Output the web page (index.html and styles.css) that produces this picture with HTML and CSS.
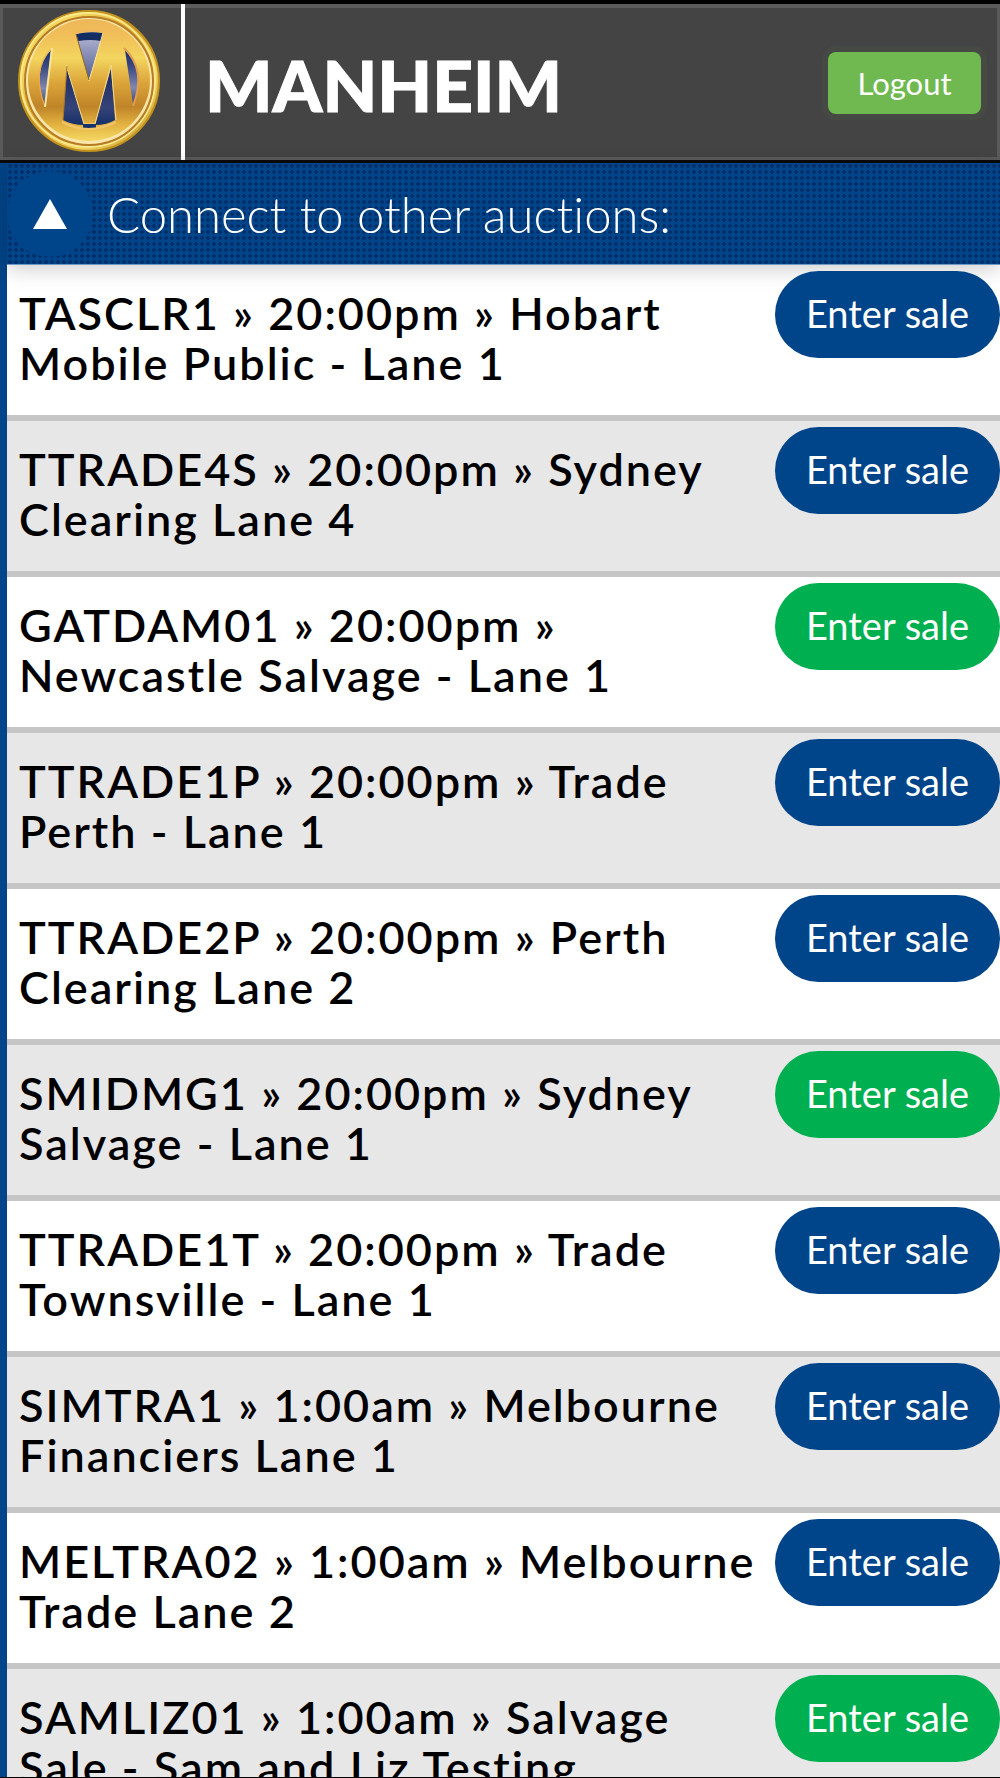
FILE: index.html
```html
<!DOCTYPE html>
<html lang="en">
<head>
<meta charset="utf-8">
<meta name="viewport" content="width=device-width, initial-scale=1">
<title>Manheim auctions</title>
<link rel="stylesheet" href="styles.css">
</head>
<body>
<div class="app">
  <header class="topbar">
    <svg class="logo" viewBox="0 0 144 144" aria-hidden="true">
      <defs>
        <linearGradient id="rim" x1="0" y1="0" x2="1" y2="1">
          <stop offset="0" stop-color="#d9a528"/>
          <stop offset=".2" stop-color="#f6dc62"/>
          <stop offset=".45" stop-color="#dda62c"/>
          <stop offset=".7" stop-color="#f4d663"/>
          <stop offset="1" stop-color="#bd8a1c"/>
        </linearGradient>
        <linearGradient id="gold" x1="0" y1="0" x2="0" y2="1">
          <stop offset="0" stop-color="#eeb75a"/>
          <stop offset=".12" stop-color="#f0bd58"/>
          <stop offset=".32" stop-color="#f3d55f"/>
          <stop offset=".52" stop-color="#dca53a"/>
          <stop offset=".72" stop-color="#bf8428"/>
          <stop offset=".86" stop-color="#e2b140"/>
          <stop offset="1" stop-color="#f4d862"/>
        </linearGradient>
        <linearGradient id="sky" x1="0" y1="0" x2="0" y2="1">
          <stop offset="0" stop-color="#b9bbd6"/>
          <stop offset="1" stop-color="#505a90"/>
        </linearGradient>
        <linearGradient id="navy" x1="0" y1="0" x2="0" y2="1">
          <stop offset="0" stop-color="#1b2a62"/>
          <stop offset=".7" stop-color="#354377"/>
          <stop offset="1" stop-color="#15306a"/>
        </linearGradient>
        <linearGradient id="lens" x1="0" y1="0" x2="0" y2="1">
          <stop offset="0" stop-color="#15306a"/>
          <stop offset=".3" stop-color="#3c497f"/>
          <stop offset=".7" stop-color="#8087b0"/>
          <stop offset="1" stop-color="#354377"/>
        </linearGradient>
      </defs>
      <circle cx="72" cy="71" r="70" fill="url(#rim)" stroke="#c2921f" stroke-width="2"/>
      <circle cx="71" cy="70" r="67" fill="none" stroke="#f8e88c" stroke-width="2"/>
      <circle cx="72" cy="71" r="64" fill="#fae6a8" stroke="#b57b25" stroke-width="2"/>
      <circle cx="72" cy="70" r="61" fill="url(#gold)"/>
      <path d="M59 24q13-3 27-1L72 70z" fill="url(#sky)"/>
      <path d="M59 24q13-3 27-1l-2 8q-10-2-23 0z" fill="#132d62"/>
      <path d="M59 23q13-4 27-1" fill="none" stroke="#f0b660" stroke-width="2"/>
      <path d="M86 23L72 71" fill="none" stroke="#f8e6a0" stroke-width="1"/>
      <path d="M59 24l13 46" fill="none" stroke="#8a6528" stroke-width="1"/>
      <path d="M50 58l17 57q-12 0-21-5z" fill="url(#navy)"/>
      <path d="M94 58L78 115q12 0 20-5z" fill="url(#navy)"/>
      <path d="M49 55l18 59h11l16-59 5 55" fill="none" stroke="#f3dc90" stroke-width="1"/>
      <path d="M50 56l-4 54" fill="none" stroke="#a87828" stroke-width="1"/>
      <path d="M66 114h13v4q-6 1-13 0z" fill="#15306a"/>
      <path d="M45 112q26 14 54 0" fill="none" stroke="#f0c56b" stroke-width="2"/>
      <path d="M34 40Q15 60 28 95z" fill="url(#lens)"/>
      <path d="M34 39Q14 60 28 97" fill="none" stroke="#f0a850" stroke-width="1"/>
      <path d="M35 38l-7 59" fill="none" stroke="#f8e6a0" stroke-width="2"/>
      <path d="M108 40q21 20 8 54z" fill="url(#lens)"/>
      <path d="M107 38q23 22 9 58" fill="none" stroke="#e19d52" stroke-width="2"/>
    </svg>
    <span class="brand">MANHEIM</span>
    <button class="logout" type="button">Logout</button>
  </header>
  <main class="panel">
    <div class="panel-head">
      <button class="toggle" type="button" aria-label="Collapse auctions">
        <svg class="arrow" viewBox="0 0 34 30" aria-hidden="true"><path d="M17 0l17 30H0z" fill="#fff"/></svg>
      </button>
      <h1 class="title">Connect to other auctions:</h1>
    </div>
    <ul class="sales">
      <li class="sale"><span class="name">TASCLR1 » 20:00pm » Hobart Mobile Public - Lane 1</span><button class="enter" type="button">Enter sale</button></li>
      <li class="sale"><span class="name">TTRADE4S » 20:00pm » Sydney Clearing Lane 4</span><button class="enter" type="button">Enter sale</button></li>
      <li class="sale"><span class="name">GATDAM01 » 20:00pm » Newcastle Salvage - Lane 1</span><button class="enter salvage" type="button">Enter sale</button></li>
      <li class="sale"><span class="name">TTRADE1P » 20:00pm » Trade Perth - Lane 1</span><button class="enter" type="button">Enter sale</button></li>
      <li class="sale"><span class="name">TTRADE2P » 20:00pm » Perth Clearing Lane 2</span><button class="enter" type="button">Enter sale</button></li>
      <li class="sale"><span class="name">SMIDMG1 » 20:00pm » Sydney Salvage - Lane 1</span><button class="enter salvage" type="button">Enter sale</button></li>
      <li class="sale"><span class="name">TTRADE1T » 20:00pm » Trade Townsville - Lane 1</span><button class="enter" type="button">Enter sale</button></li>
      <li class="sale"><span class="name">SIMTRA1 » 1:00am » Melbourne Financiers Lane 1</span><button class="enter" type="button">Enter sale</button></li>
      <li class="sale"><span class="name">MELTRA02 » 1:00am » Melbourne Trade Lane 2</span><button class="enter" type="button">Enter sale</button></li>
      <li class="sale"><span class="name">SAMLIZ01 » 1:00am » Salvage Sale - Sam and Liz Testing</span><button class="enter salvage" type="button">Enter sale</button></li>
    </ul>
  </main>
</div>
</body>
</html>
```
FILE: styles.css
```css
* {
  box-sizing: border-box;
}

body {
  margin: 0;
  font-family: Lato, "Liberation Sans", sans-serif;
  font-variant-ligatures: none;
  color: #000;
}

button {
  border: 0;
  padding: 0;
  font: inherit;
  color: #fff;
  cursor: pointer;
}

.app {
  display: flex;
  flex-direction: column;
  height: 100vh;
  overflow: hidden;
  border-top: 4px solid #000;
  border-bottom: 1px solid #000;
}

.topbar {
  display: flex;
  flex: none;
  align-items: center;
  height: 156px;
  padding-right: 16px;
  padding-left: 14px;
  background: #444;
  border: solid #5a5a5a;
  border-width: 4px 3px 3px;
  box-shadow: 0 3px 0 #0a0a0a;
}

.logo {
  width: 144px;
  height: 144px;
  margin-bottom: 2px;
}

.brand {
  display: flex;
  align-items: center;
  align-self: stretch;
  margin: -4px 0 -3px 20px;
  padding: 6px 0 0 20px;
  border-left: 4px solid #fff;
  color: #fff;
  font-size: 71px;
  font-weight: 900;
  line-height: 84px;
  -webkit-text-stroke: 1px #fff;
}

.logout {
  width: 153px;
  height: 62px;
  margin-left: auto;
  border-radius: 8px;
  background: #70b951;
  box-shadow: 0 0 0 6px rgb(112 185 81 / 5%);
  font-size: 31px;
}

.panel {
  flex: 1;
  min-height: 0;
  margin-top: 3px;
  border-left: 7px solid #004489;
}

.panel-head {
  position: relative;
  display: flex;
  align-items: center;
  gap: 14px;
  height: 102px;
  background: radial-gradient(circle, #00306b 0 2px, transparent 2px) 0 0 / 6px 6px, #004489;
  border-bottom: 1px solid #6e9ac8;
  box-shadow: 0 4px 20px rgb(0 0 0 / 20%);
}

.toggle {
  display: grid;
  place-items: center;
  width: 86px;
  height: 86px;
  border-radius: 50%;
  background: #004489;
}

.arrow {
  width: 34px;
  height: 30px;
}

.title {
  margin: 0;
  color: #fff;
  font-size: 49px;
  font-weight: 300;
  line-height: 60px;
}

.sales {
  margin: 0;
  padding: 0;
  list-style: none;
}

.sale {
  display: flex;
  align-items: flex-start;
  justify-content: space-between;
  gap: 12px;
  min-height: 156px;
  padding: 6px 0 0 12px;
  border-bottom: 6px solid #c5c5c5;
  background: #fff;
}

.sale:nth-child(even) {
  background: #e7e7e7;
}

.name {
  padding-top: 17px;
  font-size: 45px;
  font-weight: 600;
  line-height: 50px;
  letter-spacing: 2px;
}

.enter {
  position: relative;
  flex: none;
  width: 225px;
  height: 87px;
  padding-bottom: 4px;
  border-radius: 44px;
  background: #004489;
  font-size: 38px;
}

.enter.salvage {
  background: #00b050;
}
```
